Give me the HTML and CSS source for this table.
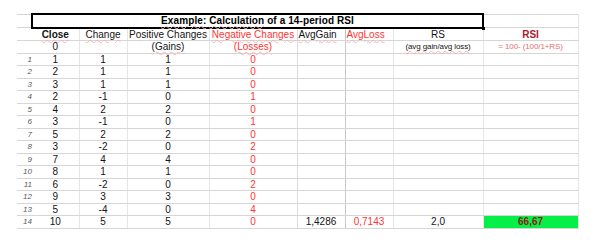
FILE: index.html
```html
<!DOCTYPE html>
<html>
<head>
<meta charset="utf-8">
<link rel="stylesheet" href="styles.css">
</head>
<body>
<table class="sheet">
  <colgroup>
    <col class="c-num"><col class="c-close"><col class="c-change"><col class="c-pos"><col class="c-neg"><col class="c-gain"><col class="c-loss"><col class="c-rs"><col class="c-rsi">
  </colgroup>
  <tr class="title-row">
    <td class="num"></td>
    <td class="title" colspan="7"><span class="sp">Example:</span> <span class="sp">Calculation</span> of a 14-period RSI<span class="handle"></span></td>
    <td class="rsi"></td>
  </tr>
  <tr>
    <td class="num"></td>
    <td class="close bold"><span class="sp">Close</span></td>
    <td class="change"><span class="sp">Change</span></td>
    <td class="pos">Positive Changes</td>
    <td class="neg red"><span class="sp">Negative Changes</span></td>
    <td class="gain left"><span class="sp">AvgGain</span></td>
    <td class="loss left red"><span class="sp">AvgLoss</span></td>
    <td class="rs">RS</td>
    <td class="rsi rsi-head">RSI</td>
  </tr>
  <tr>
    <td class="num"></td>
    <td class="close">0</td>
    <td class="change"></td>
    <td class="pos"><span class="sp">(Gains)</span></td>
    <td class="neg red"><span class="sp">(Losses)</span></td>
    <td class="gain"></td>
    <td class="loss"></td>
    <td class="rs small"><span class="sp">(avg gain/avg loss)</span></td>
    <td class="rsi small formula">= 100- (100/1+RS)</td>
  </tr>
  <tr><td class="num">1</td><td class="close">1</td><td class="change">1</td><td class="pos">1</td><td class="neg red">0</td><td class="gain"></td><td class="loss"></td><td class="rs"></td><td class="rsi"></td></tr>
  <tr><td class="num">2</td><td class="close">2</td><td class="change">1</td><td class="pos">1</td><td class="neg red">0</td><td class="gain"></td><td class="loss"></td><td class="rs"></td><td class="rsi"></td></tr>
  <tr><td class="num">3</td><td class="close">3</td><td class="change">1</td><td class="pos">1</td><td class="neg red">0</td><td class="gain"></td><td class="loss"></td><td class="rs"></td><td class="rsi"></td></tr>
  <tr><td class="num">4</td><td class="close">2</td><td class="change">-1</td><td class="pos">0</td><td class="neg red">1</td><td class="gain"></td><td class="loss"></td><td class="rs"></td><td class="rsi"></td></tr>
  <tr><td class="num">5</td><td class="close">4</td><td class="change">2</td><td class="pos">2</td><td class="neg red">0</td><td class="gain"></td><td class="loss"></td><td class="rs"></td><td class="rsi"></td></tr>
  <tr><td class="num">6</td><td class="close">3</td><td class="change">-1</td><td class="pos">0</td><td class="neg red">1</td><td class="gain"></td><td class="loss"></td><td class="rs"></td><td class="rsi"></td></tr>
  <tr><td class="num">7</td><td class="close">5</td><td class="change">2</td><td class="pos">2</td><td class="neg red">0</td><td class="gain"></td><td class="loss"></td><td class="rs"></td><td class="rsi"></td></tr>
  <tr><td class="num">8</td><td class="close">3</td><td class="change">-2</td><td class="pos">0</td><td class="neg red">2</td><td class="gain"></td><td class="loss"></td><td class="rs"></td><td class="rsi"></td></tr>
  <tr><td class="num">9</td><td class="close">7</td><td class="change">4</td><td class="pos">4</td><td class="neg red">0</td><td class="gain"></td><td class="loss"></td><td class="rs"></td><td class="rsi"></td></tr>
  <tr><td class="num">10</td><td class="close">8</td><td class="change">1</td><td class="pos">1</td><td class="neg red">0</td><td class="gain"></td><td class="loss"></td><td class="rs"></td><td class="rsi"></td></tr>
  <tr><td class="num">11</td><td class="close">6</td><td class="change">-2</td><td class="pos">0</td><td class="neg red">2</td><td class="gain"></td><td class="loss"></td><td class="rs"></td><td class="rsi"></td></tr>
  <tr><td class="num">12</td><td class="close">9</td><td class="change">3</td><td class="pos">3</td><td class="neg red">0</td><td class="gain"></td><td class="loss"></td><td class="rs"></td><td class="rsi"></td></tr>
  <tr><td class="num">13</td><td class="close">5</td><td class="change">-4</td><td class="pos">0</td><td class="neg red">4</td><td class="gain"></td><td class="loss"></td><td class="rs"></td><td class="rsi"></td></tr>
  <tr><td class="num">14</td><td class="close">10</td><td class="change">5</td><td class="pos">5</td><td class="neg red">0</td><td class="gain">1,4286</td><td class="loss red">0,7143</td><td class="rs">2,0</td><td class="rsi result">66,67</td></tr>
</table>
</body>
</html>
```

FILE: styles.css
```css
html, body {
  margin: 0;
  padding: 0;
  background: #ffffff;
}

body {
  padding: 13px 0 0 17px;
  font-family: "Liberation Sans", Arial, sans-serif;
  font-size: 10px;
  color: #141414;
}

.sheet {
  border-collapse: collapse;
  table-layout: fixed;
  width: 561px;
}

.c-num { width: 15px; }
.c-close { width: 47px; }
.c-change { width: 48px; }
.c-pos { width: 82px; }
.c-neg { width: 88px; }
.c-gain { width: 48px; }
.c-loss { width: 48px; }
.c-rs { width: 90px; }
.c-rsi { width: 95px; }

.sheet tr {
  height: 12.5px;
}

.sheet td {
  padding: 0;
  height: 11.5px;
  line-height: 11px;
  text-align: center;
  white-space: nowrap;
  overflow: visible;
  border-top: 1px solid #d6d6d6;
  border-bottom: 1px solid #d6d6d6;
  border-left: none;
  border-right: 1px solid #e6e6e6;
  vertical-align: middle;
}

.sheet td.num {
  border-right: none;
  text-align: right;
  padding-right: 0;
  font-style: italic;
  font-size: 8px;
  color: #5a5a5a;
}

.sheet td.close {
  border-left: none;
}

.sheet td.neg {
  border-right: 1px solid #dcdcdc;
}

.sheet td.gain {
  border-right: 1px solid #c8c8c8;
}

.title-row td.title {
  border: 2px solid #000000;
  font-weight: bold;
  font-size: 10px;
  letter-spacing: 0.1px;
  color: #000000;
  position: relative;
}

.handle {
  position: absolute;
  right: -3px;
  bottom: -3px;
  width: 3px;
  height: 3px;
  background: #000000;
}

.bold {
  font-weight: bold;
}

.left {
  text-align: left !important;
  padding-left: 1px !important;
}

.red {
  color: #ff3535;
}

.rsi-head {
  font-weight: bold;
  color: #a8202c;
}

.small {
  font-size: 8px;
  letter-spacing: -0.1px;
}

.formula {
  color: #e57070;
}

.sheet td.result {
  background: #06ef48;
  color: #8e1c1c;
  font-weight: bold;
}

.sp {
  text-decoration: underline wavy #f5b4b4;
  text-decoration-thickness: 1px;
  text-underline-offset: 1px;
}
```
